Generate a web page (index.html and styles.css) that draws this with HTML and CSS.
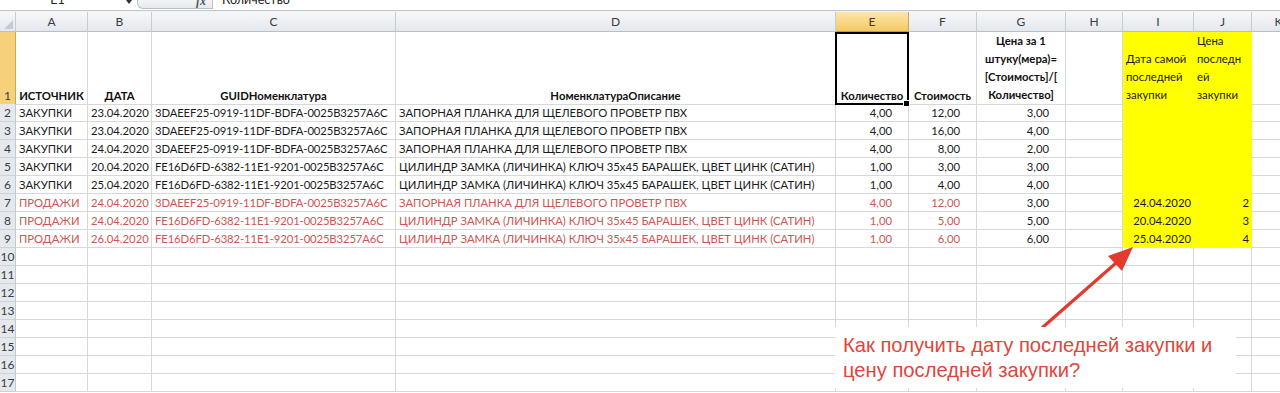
FILE: index.html
```html
<!DOCTYPE html>
<html lang="ru">
<head>
<meta charset="utf-8">
<title>Excel</title>
<link rel="stylesheet" href="styles.css">
</head>
<body>
<div class="app">
  <div class="fbar">
    <div class="namebox">E1</div>
    <div class="dd"><span class="tri"></span></div>
    <div class="fxbox"><span class="fx">fx</span></div>
    <div class="formula">Количество</div>
  </div>
  <div class="sep"></div>
  <div class="sheet">
    <div class="row hdr">
      <div class="c corner"></div><div class="c ch">A</div><div class="c ch">B</div><div class="c ch">C</div><div class="c ch">D</div><div class="c ch chs">E</div><div class="c ch">F</div><div class="c ch">G</div><div class="c ch">H</div><div class="c ch">I</div><div class="c ch">J</div><div class="c ch">K</div>
    </div>
    <div class="row r1">
      <div class="c rh rhs"><span>1</span></div>
      <div class="c h"><span>ИСТОЧНИК</span></div>
      <div class="c h"><span>ДАТА</span></div>
      <div class="c h"><span>GUIDНоменклатура</span></div>
      <div class="c h"><span>НоменклатураОписание</span></div>
      <div class="c h act"><span>Количество</span></div>
      <div class="c h"><span>Стоимость</span></div>
      <div class="c h tall"><span>Цена за 1<br>штуку(мера)=<br>[Стоимость]/[<br>Количество]</span></div>
      <div class="c"></div>
      <div class="c y hl"><span>Дата самой<br>последней<br>закупки</span></div>
      <div class="c y hl"><span>Цена<br>последн<br>ей<br>закупки</span></div>
      <div class="c"></div>
    </div>
    <div class="row">
      <div class="c rh">2</div><div class="c">ЗАКУПКИ</div><div class="c r">23.04.2020</div><div class="c g">3DAEEF25-0919-11DF-BDFA-0025B3257A6C</div><div class="c">ЗАПОРНАЯ ПЛАНКА ДЛЯ ЩЕЛЕВОГО ПРОВЕТР ПВХ</div><div class="c n">4,00</div><div class="c n">12,00</div><div class="c n">3,00</div><div class="c"></div><div class="c y"></div><div class="c y"></div><div class="c"></div>
    </div>
    <div class="row">
      <div class="c rh">3</div><div class="c">ЗАКУПКИ</div><div class="c r">23.04.2020</div><div class="c g">3DAEEF25-0919-11DF-BDFA-0025B3257A6C</div><div class="c">ЗАПОРНАЯ ПЛАНКА ДЛЯ ЩЕЛЕВОГО ПРОВЕТР ПВХ</div><div class="c n">4,00</div><div class="c n">16,00</div><div class="c n">4,00</div><div class="c"></div><div class="c y"></div><div class="c y"></div><div class="c"></div>
    </div>
    <div class="row">
      <div class="c rh">4</div><div class="c">ЗАКУПКИ</div><div class="c r">24.04.2020</div><div class="c g">3DAEEF25-0919-11DF-BDFA-0025B3257A6C</div><div class="c">ЗАПОРНАЯ ПЛАНКА ДЛЯ ЩЕЛЕВОГО ПРОВЕТР ПВХ</div><div class="c n">4,00</div><div class="c n">8,00</div><div class="c n">2,00</div><div class="c"></div><div class="c y"></div><div class="c y"></div><div class="c"></div>
    </div>
    <div class="row">
      <div class="c rh">5</div><div class="c">ЗАКУПКИ</div><div class="c r">20.04.2020</div><div class="c g">FE16D6FD-6382-11E1-9201-0025B3257A6C</div><div class="c">ЦИЛИНДР ЗАМКА (ЛИЧИНКА) КЛЮЧ 35х45 БАРАШЕК, ЦВЕТ ЦИНК (САТИН)</div><div class="c n">1,00</div><div class="c n">3,00</div><div class="c n">3,00</div><div class="c"></div><div class="c y"></div><div class="c y"></div><div class="c"></div>
    </div>
    <div class="row">
      <div class="c rh">6</div><div class="c">ЗАКУПКИ</div><div class="c r">25.04.2020</div><div class="c g">FE16D6FD-6382-11E1-9201-0025B3257A6C</div><div class="c">ЦИЛИНДР ЗАМКА (ЛИЧИНКА) КЛЮЧ 35х45 БАРАШЕК, ЦВЕТ ЦИНК (САТИН)</div><div class="c n">1,00</div><div class="c n">4,00</div><div class="c n">4,00</div><div class="c"></div><div class="c y"></div><div class="c y"></div><div class="c"></div>
    </div>
    <div class="row red">
      <div class="c rh">7</div><div class="c">ПРОДАЖИ</div><div class="c r">24.04.2020</div><div class="c g">3DAEEF25-0919-11DF-BDFA-0025B3257A6C</div><div class="c">ЗАПОРНАЯ ПЛАНКА ДЛЯ ЩЕЛЕВОГО ПРОВЕТР ПВХ</div><div class="c n">4,00</div><div class="c n">12,00</div><div class="c n blk">3,00</div><div class="c"></div><div class="c y r blk">24.04.2020</div><div class="c y r blk">2</div><div class="c"></div>
    </div>
    <div class="row red">
      <div class="c rh">8</div><div class="c">ПРОДАЖИ</div><div class="c r">24.04.2020</div><div class="c g">FE16D6FD-6382-11E1-9201-0025B3257A6C</div><div class="c">ЦИЛИНДР ЗАМКА (ЛИЧИНКА) КЛЮЧ 35х45 БАРАШЕК, ЦВЕТ ЦИНК (САТИН)</div><div class="c n">1,00</div><div class="c n">5,00</div><div class="c n blk">5,00</div><div class="c"></div><div class="c y r blk">20.04.2020</div><div class="c y r blk">3</div><div class="c"></div>
    </div>
    <div class="row red">
      <div class="c rh">9</div><div class="c">ПРОДАЖИ</div><div class="c r">26.04.2020</div><div class="c g">FE16D6FD-6382-11E1-9201-0025B3257A6C</div><div class="c">ЦИЛИНДР ЗАМКА (ЛИЧИНКА) КЛЮЧ 35х45 БАРАШЕК, ЦВЕТ ЦИНК (САТИН)</div><div class="c n">1,00</div><div class="c n">6,00</div><div class="c n blk">6,00</div><div class="c"></div><div class="c y r blk">25.04.2020</div><div class="c y r blk">4</div><div class="c"></div>
    </div>
    <div class="row"><div class="c rh">10</div><div class="c"></div><div class="c"></div><div class="c"></div><div class="c"></div><div class="c"></div><div class="c"></div><div class="c"></div><div class="c"></div><div class="c"></div><div class="c"></div><div class="c"></div></div>
    <div class="row"><div class="c rh">11</div><div class="c"></div><div class="c"></div><div class="c"></div><div class="c"></div><div class="c"></div><div class="c"></div><div class="c"></div><div class="c"></div><div class="c"></div><div class="c"></div><div class="c"></div></div>
    <div class="row"><div class="c rh">12</div><div class="c"></div><div class="c"></div><div class="c"></div><div class="c"></div><div class="c"></div><div class="c"></div><div class="c"></div><div class="c"></div><div class="c"></div><div class="c"></div><div class="c"></div></div>
    <div class="row"><div class="c rh">13</div><div class="c"></div><div class="c"></div><div class="c"></div><div class="c"></div><div class="c"></div><div class="c"></div><div class="c"></div><div class="c"></div><div class="c"></div><div class="c"></div><div class="c"></div></div>
    <div class="row"><div class="c rh">14</div><div class="c"></div><div class="c"></div><div class="c"></div><div class="c"></div><div class="c"></div><div class="c"></div><div class="c"></div><div class="c"></div><div class="c"></div><div class="c"></div><div class="c"></div></div>
    <div class="row"><div class="c rh">15</div><div class="c"></div><div class="c"></div><div class="c"></div><div class="c"></div><div class="c"></div><div class="c"></div><div class="c"></div><div class="c"></div><div class="c"></div><div class="c"></div><div class="c"></div></div>
    <div class="row"><div class="c rh">16</div><div class="c"></div><div class="c"></div><div class="c"></div><div class="c"></div><div class="c"></div><div class="c"></div><div class="c"></div><div class="c"></div><div class="c"></div><div class="c"></div><div class="c"></div></div>
    <div class="row"><div class="c rh">17</div><div class="c"></div><div class="c"></div><div class="c"></div><div class="c"></div><div class="c"></div><div class="c"></div><div class="c"></div><div class="c"></div><div class="c"></div><div class="c"></div><div class="c"></div></div>
  </div>

  <svg class="arrow" width="110" height="95" viewBox="0 0 110 95" aria-hidden="true">
    <line x1="13" y1="87" x2="86" y2="23" stroke="#e23b2e" stroke-width="3.2" stroke-linecap="round"/>
    <polygon points="103,7 78,16 92,31" fill="#e23b2e"/>
  </svg>
  <div class="note">Как получить дату последней закупки и<br>цену последней закупки?</div>
</div>
</body>
</html>
```
FILE: styles.css
```css
* { box-sizing: border-box; }
html, body { margin: 0; padding: 0; background: #fff; }
body { overflow: hidden; width: 1280px; height: 393px; }

.app {
  position: relative;
  width: 1280px;
  height: 393px;
  overflow: hidden;
  font-family: "Lato", "Carlito", "Open Sans", sans-serif;
  font-size: 11.3px;
  color: #1b1b1b;
}

/* formula bar */
.fbar {
  display: flex;
  height: 10px;
  overflow: hidden;
  background: #fff;
  font-size: 12.5px;
}
.namebox {
  width: 115px;
  text-align: center;
  margin-top: -9px;
  line-height: 17px;
  color: #222;
}
.dd {
  width: 22px;
  padding-left: 11px;
}
.tri {
  display: block;
  width: 0;
  height: 0;
  border-left: 3px solid transparent;
  border-right: 3px solid transparent;
  border-top: 4px solid #333;
}
.fxbox {
  width: 76px;
  height: 9px;
  display: flex;
  justify-content: flex-end;
  align-items: flex-end;
  background: linear-gradient(#f3f4f6, #e6e9ed);
  border: 1px solid #b9bfc7;
  border-top: none;
  border-radius: 0 0 0 6px;
  overflow: hidden;
}
.fx {
  font-family: "Liberation Serif", serif;
  font-style: italic;
  font-weight: bold;
  font-size: 12px;
  line-height: 12px;
  color: #555;
  margin-right: 6px;
  margin-bottom: 1px;
}
.formula {
  flex: 1;
  padding-left: 9px;
  margin-top: -9px;
  line-height: 17px;
  color: #222;
}
.sep {
  height: 2px;
  border-top: 1px solid #c3c8cf;
  background: #f1f2f4;
}

/* sheet */
.sheet {
  width: 1280px;
  overflow: hidden;
}
.row {
  display: grid;
  grid-template-columns: 16px 72px 64px 244px 440px 73px 68px 89px 57px 71px 58px 54px;
  height: 18px;
}
.c {
  border-right: 1px solid #d6d8da;
  border-bottom: 1px solid #d6d8da;
  padding: 0 3px;
  line-height: 17px;
  white-space: nowrap;
  overflow: hidden;
}
.g { letter-spacing: -0.12px; }
.r { text-align: right; }
.n { text-align: right; padding-right: 16px; }
.red .c { color: #cc5652; }
.red .c.blk { color: #1b1b1b; }
.red .c.rh { color: #3c3c3c; }

/* headers */
.hdr { height: 20px; }
.ch {
  background: linear-gradient(#f6f7f9, #e4e8ed);
  border-right-color: #c6ccd4;
  border-bottom-color: #b8bfc8;
  text-align: center;
  line-height: 19px;
  font-size: 12px;
  color: #3c3c3c;
  padding: 0;
}
.chs {
  background: linear-gradient(#fde6a8, #f4c965);
  border-right-color: #c9a85c;
  border-bottom-color: #c29a45;
}
.corner {
  position: relative;
  background: linear-gradient(#f6f7f9, #e4e8ed);
  border-right-color: #c6ccd4;
  border-bottom-color: #b8bfc8;
}
.corner::after {
  content: "";
  position: absolute;
  right: 2px;
  bottom: 2px;
  width: 0;
  height: 0;
  border-left: 9px solid transparent;
  border-bottom: 9px solid #c6cbd2;
}
.rh {
  background: #e5e9ee;
  border-right-color: #c3c9d1;
  border-bottom-color: #cdd2d8;
  color: #3c3c3c;
  font-size: 12px;
  text-align: center;
  padding: 0;
}
.rhs { background: #f7d07a; border-right-color: #c9a85c; }

/* row 1 */
.r1 { height: 72px; }
.r1 .c {
  display: grid;
  align-content: end;
  overflow: visible;
}
.h {
  font-weight: bold;
  text-align: center;
  color: #111;
  padding: 0 1px;
}
.tall { line-height: 18px; }
.hl { line-height: 18px; text-align: left; color: #1b1b1b; }

.y {
  background: #ffff00;
  border-right-color: #ffff00;
  border-bottom-color: #ffff00;
}
.y.r { padding-right: 2px; }

/* selected cell */
.act { position: relative; }
.act::after {
  content: "";
  position: absolute;
  left: -1px;
  top: 0;
  right: -1px;
  bottom: -1px;
  border: 2px solid #000;
}
.act::before {
  content: "";
  position: absolute;
  right: -2px;
  bottom: -3px;
  width: 5px;
  height: 5px;
  background: #000;
  border: 1px solid #fff;
  z-index: 1;
}

/* annotation */
.arrow {
  position: absolute;
  left: 1030px;
  top: 240px;
}
.note {
  position: absolute;
  left: 835px;
  top: 327px;
  width: 401px;
  height: 61px;
  padding: 6px 0 5px 8px;
  background: #fff;
  font-family: "Liberation Sans", Arial, sans-serif;
  font-size: 20.2px;
  line-height: 25px;
  color: #e2453a;
}
```
